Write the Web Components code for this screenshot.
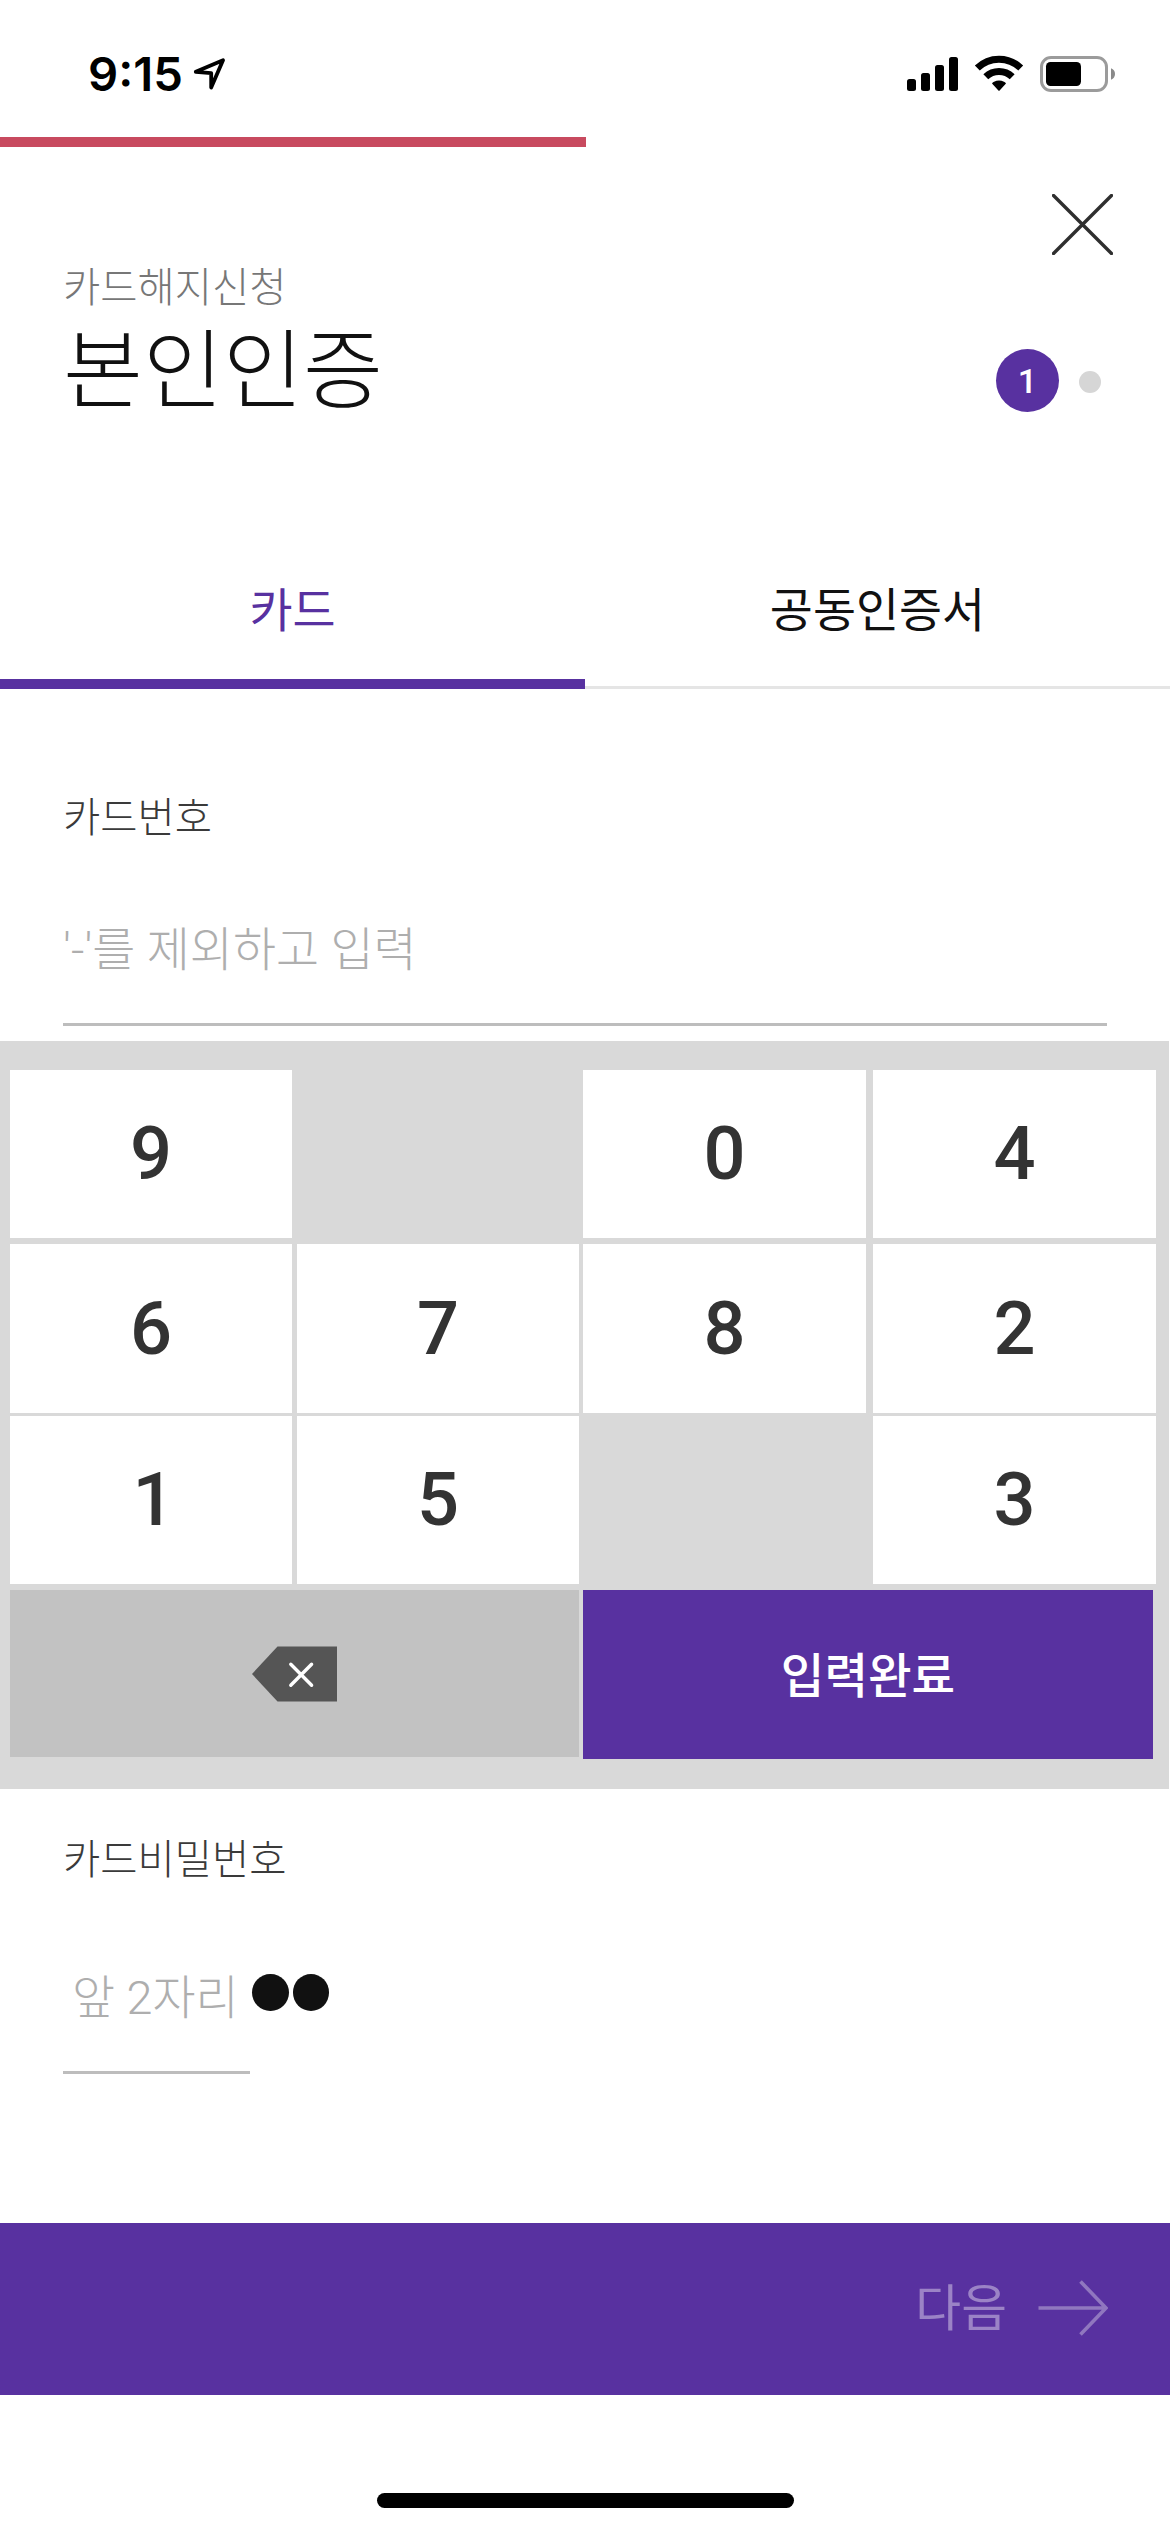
<!DOCTYPE html>
<html lang="ko">
<head>
<meta charset="utf-8">
<title>본인인증</title>
<style>
html,body{margin:0;background:#fff}
body{width:1170px;height:2532px;overflow:hidden;font-family:"Noto Sans CJK KR",sans-serif;color:#111}
</style>
</head>
<body>
<auth-page></auth-page>

<script>
const define = (name, css, html) => {
  const tpl = document.createElement('template');
  tpl.innerHTML = `<style>*{box-sizing:border-box}svg{display:block;flex:none}${css}</style>${html}`;
  customElements.define(name, class extends HTMLElement {
    constructor() {
      super();
      this.attachShadow({mode: 'open'}).append(tpl.content.cloneNode(true));
    }
  });
};

define('status-bar', `
  :host{display:flex;height:137px;align-items:flex-start;padding-left:88px;color:#000}
  .time{font:600 47.200px/60px Inter,sans-serif;margin-top:44px;width:105px;white-space:nowrap}
  .loc{margin-top:57px}
  .sig{margin:57px 0 0 682px}
  .wifi{margin:54px 0 0 16px}
  .bat{margin:56px 0 0 16px}`, `
  <span class="time"><slot></slot></span>
  <svg class="loc" width="32" height="34" viewBox="192 57 32 34"><path d="M194.800 71.800L222 60.200L210.200 87.600V73.200Z" fill="none" stroke="#000" stroke-width="3.800" stroke-linejoin="round"/></svg>
  <svg class="sig" width="51" height="34"><rect y="22" width="9" height="12" rx="2.500"/><rect x="14" y="16" width="9" height="18" rx="2.500"/><rect x="28" y="8" width="9" height="26" rx="2.500"/><rect x="42" width="9" height="34" rx="2.500"/></svg>
  <svg class="wifi" width="50" height="38" viewBox="974 54 50 38"><g fill="none" stroke="#000" stroke-width="7"><path d="M977.300 68A31 31 0 0 1 1020.700 68"/><path d="M985.800 76.800A19 19 0 0 1 1012.200 76.800"/></g><path d="M992 83.500Q992.500 82.500 994 81.800Q999 79 1004 81.800Q1005.500 82.500 1006 83.500L999.600 90.600Q999 91 998.400 90.600Z"/></svg>
  <svg class="bat" width="76" height="36"><rect x="1.500" y="1.500" width="65" height="33" rx="9.500" fill="none" stroke="#9b9b9b" stroke-width="3"/><rect x="6" y="6" width="35" height="24" rx="4.500"/><path d="M71 12.300Q75 14 75 18Q75 22 71 23.700Z" fill="#8a8a8a"/></svg>`);

define('progress-bar', `
  :host{display:block;height:10px}
  div{height:10px;width:586px;background:#c84a5f}`, `<div></div>`);

define('step-dots', `
  :host{display:flex;align-items:center;gap:20px}
  .on{width:63px;height:63px;border-radius:50%;background:#5831a0;color:#fff;font:500 34px/64px Roboto,sans-serif;text-align:center}
  .off{width:22px;height:22px;border-radius:50%;background:#d6d6d6;margin-top:3px}`, `
  <span class="on"><slot></slot></span><span class="off"></span>`);

define('page-header', `
  :host{display:flex;justify-content:space-between;height:360px;padding:108px 0 0 63px}
  .sub{font-size:40.5px;line-height:59px;font-weight:300;color:#777}
  .title{font-size:87px;line-height:100px;font-weight:300;color:#111}
  .side{display:flex;flex-direction:column;align-items:flex-end;padding-right:57px;margin-top:-61px}
  step-dots{margin:94px 12px 0 0}`, `
  <div><div class="sub"><slot name="sub"></slot></div><div class="title"><slot name="title"></slot></div></div>
  <div class="side">
    <svg width="61" height="61" stroke="#2f2f2f" stroke-width="3.400" stroke-linecap="round"><path d="M1.500 1.500L59.500 59.500M59.500 1.500L1.500 59.500"/></svg>
    <step-dots>1</step-dots>
  </div>`);

define('tab-item', `
  :host{display:block;flex:1;height:182px;padding-top:70px;text-align:center;font-size:46.800px;line-height:60px;font-weight:400;color:#111;box-shadow:inset 0 -3px #e5e5e5}
  :host([selected]){color:#5831a0;box-shadow:inset 0 -10px #5831a0}`, `<slot></slot>`);

define('tab-row', `:host{display:flex}`, `<slot></slot>`);

define('field-label', `
  :host{display:block;font-size:40.500px;line-height:59px;font-weight:300;color:#3a3a3a}`, `<slot></slot>`);

define('field-input', `
  :host{display:flex;align-items:flex-start;height:106px;border-bottom:3px solid #bdbdbd;font:300 46.800px/60px Roboto,"Noto Sans CJK KR",sans-serif;color:#aeaeae;white-space:nowrap}`, `<slot></slot>`);

define('mask-dots', `
  :host{display:flex;gap:4px;margin-top:6px}
  i{flex:none;width:36.500px;height:37px;border-radius:50%;background:#111}`, `<i></i><i></i>`);

define('pad-key', `
  :host{display:flex;align-items:center;justify-content:center;background:#fff;color:#333;font:500 74px/80px Roboto,sans-serif}
  :host([blank]){background:none}
  :host([one]){padding-left:5px}
  :host([erase]){background:#c2c2c2;grid-column:1/4;margin-bottom:2px}
  :host([done]){background:#5831a0;color:#fff;grid-column:5/8;margin-right:3px;padding-bottom:3px;font:500 47.400px/60px "Noto Sans CJK KR",sans-serif}`, `<slot></slot>`);

define('key-pad', `
  :host{display:grid;width:1169px;height:748px;background:#d9d9d9;padding:29px 13px 30px 10px;
    grid-template-columns:282px 5px 282px 4px 283px 7px 283px;
    grid-template-rows:168px 6px 169px 3px 168px 6px 169px}
  ::slotted(.c1){grid-column:1}::slotted(.c2){grid-column:3}::slotted(.c3){grid-column:5}::slotted(.c4){grid-column:7}
  ::slotted(.r1){grid-row:1}::slotted(.r2){grid-row:3}::slotted(.r3){grid-row:5}::slotted(.r4){grid-row:7}`, `<slot></slot>`);

define('next-bar', `
  :host{display:flex;align-items:center;justify-content:flex-end;height:172px;padding-right:62px;background:#5831a0;color:#9b83c6;font-size:49.800px;line-height:60px;font-weight:400}
  span{margin:0 31px 10px 0}
  svg{margin-bottom:2px}`, `
  <span><slot></slot></span>
  <svg width="70" height="56" fill="none" stroke="#9077bf" stroke-width="3.600"><path d="M.500 28H67M42.500 1.500L68 28L42.500 54.500"/></svg>`);

define('home-indicator', `
  :host{display:flex;justify-content:center;padding-top:98px}
  i{width:417px;height:15px;border-radius:8px;background:#000}`, `<i></i>`);

define('auth-page', `
  :host{display:flex;flex-direction:column;width:1170px;height:2532px;background:#fff}
  .number{height:352px;padding:96px 63px 0}
  .number field-input{margin-top:76px}
  .secret{height:434px;padding:38px 63px 0}
  .line{margin-top:82px;width:187px}
  .hint{flex:none;width:189px;padding-left:9px}`, `
  <status-bar>9:15</status-bar>
  <progress-bar></progress-bar>
  <page-header><span slot="sub">카드해지신청</span><span slot="title">본인인증</span></page-header>
  <tab-row><tab-item selected>카드</tab-item><tab-item>공동인증서</tab-item></tab-row>
  <section class="number">
    <field-label>카드번호</field-label>
    <field-input>'-'를 제외하고 입력</field-input>
  </section>
  <key-pad>
    <pad-key class="c1 r1">9</pad-key><pad-key class="c2 r1" blank></pad-key><pad-key class="c3 r1">0</pad-key><pad-key class="c4 r1">4</pad-key>
    <pad-key class="c1 r2">6</pad-key><pad-key class="c2 r2">7</pad-key><pad-key class="c3 r2">8</pad-key><pad-key class="c4 r2">2</pad-key>
    <pad-key class="c1 r3" one>1</pad-key><pad-key class="c2 r3">5</pad-key><pad-key class="c3 r3" blank></pad-key><pad-key class="c4 r3">3</pad-key>
    <pad-key class="r4" erase><svg width="85" height="56" viewBox="0 0 85 56"><path d="M0 28L25.500 .500H85V55.500H25.500Z" fill="#555"/><path d="M38.800 18.300L59.600 39.300M59.600 18.300L38.800 39.300" stroke="#fff" stroke-width="3.400" stroke-linecap="round"/></svg></pad-key>
    <pad-key class="r4" done>입력완료</pad-key>
  </key-pad>
  <section class="secret">
    <field-label>카드비밀번호</field-label>
    <field-input class="line"><span class="hint">앞 2자리</span><mask-dots></mask-dots></field-input>
  </section>
  <next-bar>다음</next-bar>
  <home-indicator></home-indicator>`);
</script>
</body>
</html>
